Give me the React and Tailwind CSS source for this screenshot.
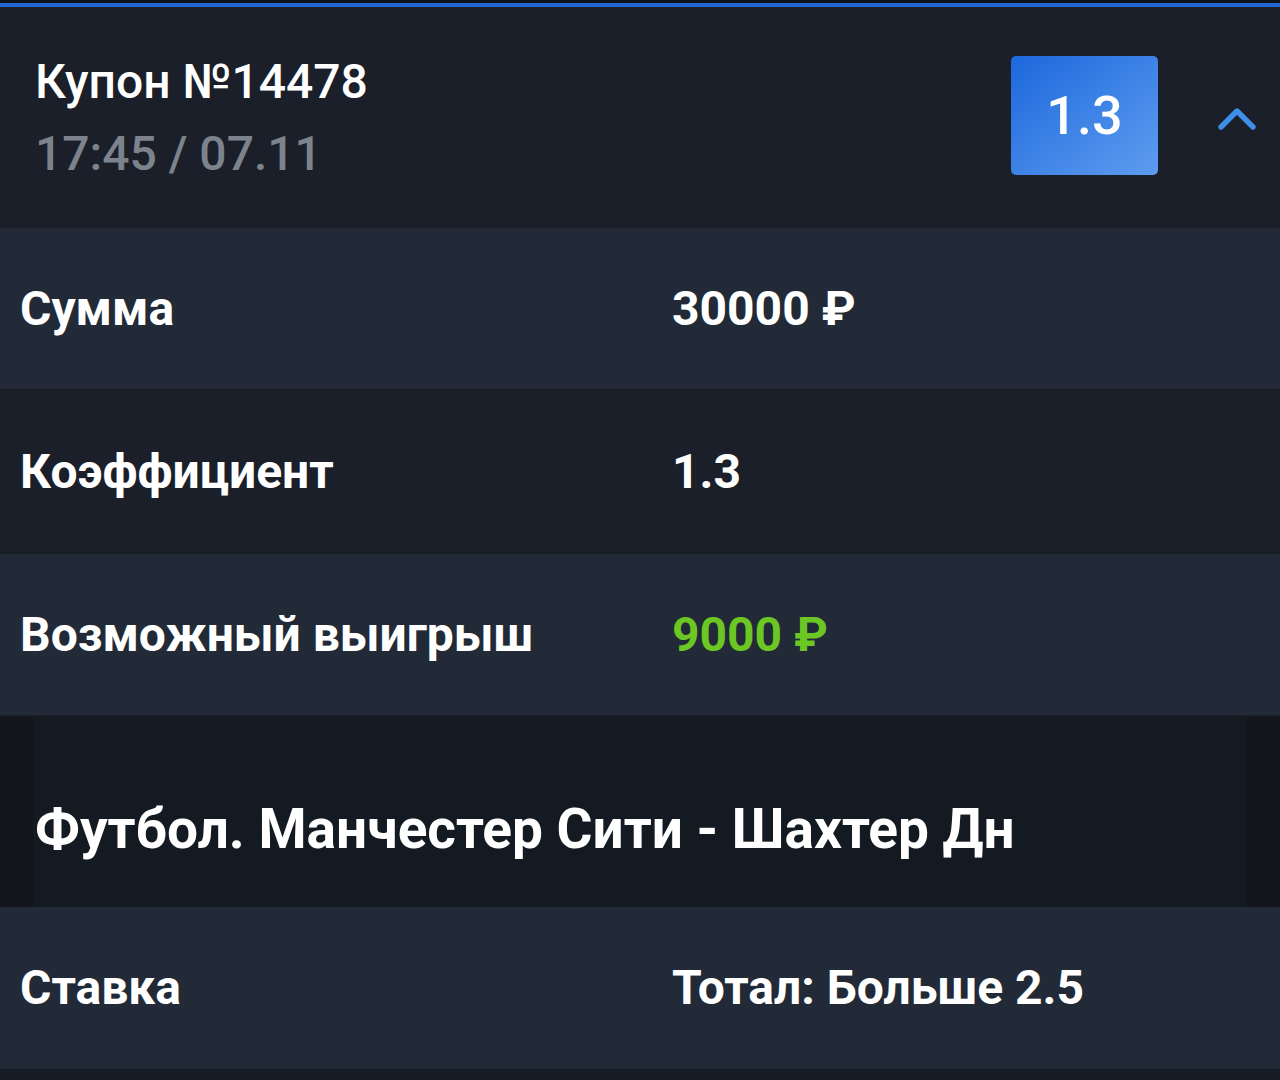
import { ChevronUp } from 'lucide-react';

const rows = [
  { label: 'Сумма', value: '30000 ₽', bg: 'bg-[#212a36]' },
  { label: 'Коэффициент', value: '1.3', bg: 'bg-[#1a1f29]' },
  { label: 'Возможный выигрыш', value: '9000 ₽', bg: 'bg-[#212a36]', green: true },
];

function InfoRow({ label, value, bg, green }) {
  return (
    <div className={`flex h-[163px] items-center border-b-2 border-[#171c25] ${bg}`}>
      <div className="w-[672px] pl-[20px] text-[48px] font-bold text-white">{label}</div>
      <div className={`text-[48px] font-bold ${green ? 'text-[#6cc623]' : 'text-white'}`}>{value}</div>
    </div>
  );
}

export default function App() {
  return (
    <div
      className="h-[1080px] w-[1280px] overflow-hidden bg-[#171d26]"
      style={{ fontFamily: 'Roboto, "Noto Sans", sans-serif' }}
    >
      <div className="h-[3px] bg-[#0e1219]" />
      <div className="h-[4px] bg-[#2466d2]" />

      {/* Header */}
      <div className="flex h-[221px] items-center bg-[#1a1f29] pl-[35px] pr-[11px]">
        <div className="flex-1">
          <div className="text-[48px] font-medium leading-[60px] text-white">Купон №14478</div>
          <div className="mt-[12px] text-[48px] font-medium leading-[60px] text-[#7d838d]">17:45 / 07.11</div>
        </div>
        <div className="flex h-[119px] w-[147px] -mt-[4px] items-center justify-center rounded-[5px] bg-gradient-to-br from-[#1b67dc] to-[#5d9cef] text-[54px] font-medium text-white">
          1.3
        </div>
        <ChevronUp className="ml-[47px] mt-[3px] h-[64px] w-[64px] text-[#3d8fe8]" strokeWidth={2} />
      </div>

      {rows.map((r) => (
        <InfoRow key={r.label} {...r} />
      ))}

      {/* Match title */}
      <div className="flex h-[190px] bg-[#111419]">
        <div className="mx-[33px] flex flex-1 items-center bg-[#141a22] pl-[2px] pt-[34px]">
          <span className="text-[55px] font-bold text-white">Футбол. Манчестер Сити - Шахтер Дн</span>
        </div>
      </div>

      <div className="flex h-[162px] items-center bg-[#212a36]">
        <div className="w-[672px] pl-[20px] text-[48px] font-bold text-white">Ставка</div>
        <div className="text-[48px] font-bold text-white">Тотал: Больше 2.5</div>
      </div>
    </div>
  );
}
